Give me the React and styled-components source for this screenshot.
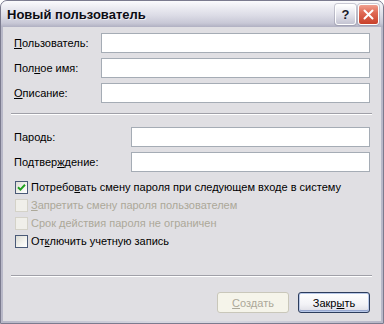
import React from "react";
import styled, { createGlobalStyle } from "styled-components";

const GlobalStyle = createGlobalStyle`
  html, body {
    margin: 0;
    padding: 0;
    background: #ffffff;
  }
  body {
    font-family: "Liberation Sans", Arial, sans-serif;
    font-size: 11px;
  }
`;

const Window = styled.div`
  width: 384px;
  height: 324px;
  box-sizing: border-box;
  display: flex;
  flex-direction: column;
  border: 1px solid #7b7b8f;
  border-radius: 7px 7px 0 0;
  background: linear-gradient(90deg, #b8b8c8, #d6d6e0 40%, #d6d6e0 60%, #b8b8c8);
  overflow: hidden;
`;

const TitleBar = styled.div`
  height: 26px;
  flex: none;
  display: flex;
  align-items: center;
  padding: 0 4px 0 6px;
  gap: 2px;
  background: linear-gradient(
    180deg,
    #fbfbfd 0%,
    #ececf2 25%,
    #dcdce6 55%,
    #c8c8d6 85%,
    #b0b0c2 100%
  );
`;

const Caption = styled.div`
  flex: 1;
  font-size: 13px;
  font-weight: bold;
  color: #0c0c14;
  text-shadow: 1px 1px 0 rgba(255, 255, 255, 0.6);
  padding-top: 1px;
`;

const CaptionButton = styled.div`
  width: 21px;
  height: 21px;
  box-sizing: border-box;
  border: 1px solid ${(p) => (p.$danger ? "#ffffff" : "#ffffff")};
  border-radius: 3px;
  display: flex;
  align-items: center;
  justify-content: center;
  box-shadow: 0 0 0 1px rgba(120, 120, 140, 0.35);
  background: ${(p) =>
    p.$danger
      ? "linear-gradient(180deg, #f0a090 0%, #e06a55 40%, #c8402a 100%)"
      : "linear-gradient(180deg, #ffffff 0%, #e4e4ec 50%, #c4c4d2 100%)"};
  color: #1a1a2a;
  font-weight: bold;
  font-size: 13px;
`;

const Body = styled.div`
  flex: 1;
  margin: 0 2px 2px;
  background: #e0dfe3;
  padding: 6px 11px 8px;
  display: flex;
  flex-direction: column;
`;

const FieldGroup = styled.div`
  display: flex;
  flex-direction: column;
  gap: 5px;
  margin-top: ${(p) => p.$top || 0}px;
`;

const Field = styled.label`
  display: grid;
  grid-template-columns: ${(p) => p.$labelWidth}px 1fr;
  align-items: center;
  height: 20px;
  color: #000000;
`;

const Input = styled.div`
  height: 20px;
  box-sizing: border-box;
  background: #ffffff;
  border: 1px solid #a5acb5;
`;

const Separator = styled.div`
  height: 0;
  border-top: 1px solid #a0a0a8;
  border-bottom: 1px solid #ffffff;
  margin: ${(p) => p.$top}px -2px 0 -3px;
`;

const CheckList = styled.div`
  margin-top: 6px;
  display: flex;
  flex-direction: column;
`;

const CheckRow = styled.div`
  height: 18px;
  display: flex;
  align-items: center;
  gap: 3px;
  padding-left: 1px;
  color: ${(p) => (p.$disabled ? "#aca899" : "#000000")};
`;

const Box = styled.span`
  width: 13px;
  height: 13px;
  box-sizing: border-box;
  flex: none;
  display: flex;
  align-items: center;
  justify-content: center;
  border: 1px solid ${(p) => (p.$disabled ? "#d4d2c8" : "#4a5a78")};
  background: ${(p) =>
    p.$disabled
      ? "#f0efea"
      : "linear-gradient(135deg, #dcdcd6 0%, #f4f4f0 60%, #ffffff 100%)"};
`;

const Footer = styled.div`
  margin-top: 15px;
  display: flex;
  justify-content: flex-end;
  gap: 9px;
`;

const Button = styled.div`
  width: 72px;
  height: 21px;
  box-sizing: border-box;
  border-radius: 3px;
  display: flex;
  align-items: center;
  justify-content: center;
  border: 1px solid ${(p) => (p.$disabled ? "#c9c7ba" : "#2c3c5c")};
  color: ${(p) => (p.$disabled ? "#aca899" : "#000000")};
  background: ${(p) =>
    p.$disabled
      ? "#f5f4ea"
      : "linear-gradient(180deg, #ffffff 0%, #f2f2f6 60%, #dcdce4 100%)"};
  box-shadow: ${(p) =>
    p.$default ? "inset 0 0 0 1px #b8c8e8, inset 0 -1px 0 1px #98a8d0" : "none"};
`;

const U = styled.u`
  text-underline-offset: 1px;
`;

const Check = () => (
  <svg width="9" height="9" viewBox="0 0 9 9">
    <path
      d="M1 4.2 L3.4 6.6 L8 1.8"
      fill="none"
      stroke="#21a121"
      strokeWidth="2"
    />
  </svg>
);

const CheckItem = ({ checked, disabled, children }) => (
  <CheckRow $disabled={disabled}>
    <Box $disabled={disabled}>{checked && <Check />}</Box>
    <span>{children}</span>
  </CheckRow>
);

export default function App() {
  return (
    <>
      <GlobalStyle />
      <Window>
        <TitleBar>
          <Caption>Новый пользователь</Caption>
          <CaptionButton>?</CaptionButton>
          <CaptionButton $danger>
            <svg width="11" height="11" viewBox="0 0 11 11">
              <path
                d="M1.5 1.5 L9.5 9.5 M9.5 1.5 L1.5 9.5"
                stroke="#ffffff"
                strokeWidth="2"
                strokeLinecap="round"
              />
            </svg>
          </CaptionButton>
        </TitleBar>
        <Body>
          <FieldGroup>
            <Field $labelWidth={87}>
              <span>
                <U>П</U>ользователь:
              </span>
              <Input />
            </Field>
            <Field $labelWidth={87}>
              <span>
                Пол<U>н</U>ое имя:
              </span>
              <Input />
            </Field>
            <Field $labelWidth={87}>
              <span>
                <U>О</U>писание:
              </span>
              <Input />
            </Field>
          </FieldGroup>

          <Separator $top={10} />

          <FieldGroup $top={12}>
            <Field $labelWidth={117}>
              <span>
                Паро<U>д</U>ь:
              </span>
              <Input />
            </Field>
            <Field $labelWidth={117}>
              <span>
                Подтвер<U>ж</U>дение:
              </span>
              <Input />
            </Field>
          </FieldGroup>

          <CheckList>
            <CheckItem checked>
              Потребо<U>в</U>ать смену пароля при следующем входе в систему
            </CheckItem>
            <CheckItem disabled>
              <U>З</U>апретить смену пароля пользователем
            </CheckItem>
            <CheckItem disabled>Срок действия пароля не ограничен</CheckItem>
            <CheckItem>
              От<U>к</U>лючить учетную запись
            </CheckItem>
          </CheckList>

          <Separator $top={25} />

          <Footer>
            <Button $disabled>
              <span>
                <U>С</U>оздать
              </span>
            </Button>
            <Button $default>
              <span>
                Закр<U>ы</U>ть
              </span>
            </Button>
          </Footer>
        </Body>
      </Window>
    </>
  );
}
